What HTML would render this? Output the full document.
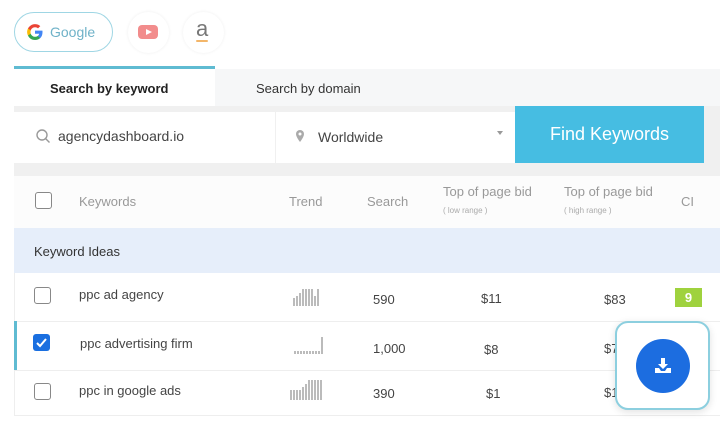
<!DOCTYPE html>
<html><head><meta charset="utf-8"><style>
*{margin:0;padding:0;box-sizing:border-box}
body{width:720px;height:422px;background:#fff;font-family:"Liberation Sans",sans-serif;position:relative;overflow:hidden;color:#333}
.a{position:absolute}
.t{font-size:13px;color:#444}
.h{font-size:13px;color:#999}
.cb{position:absolute;width:17px;height:17px;border:1.5px solid #888;border-radius:3px;background:#fff}
.bars{position:absolute;display:flex;align-items:flex-end;gap:1px;height:20px}
.bars i{display:block;width:2px;background:#bbb}
</style></head><body>
<!-- top pills -->
<div class="a" style="left:14px;top:12px;width:99px;height:40px;border:1.5px solid #9fd6e4;border-radius:20px;background:#fff"></div>
<svg class="a" style="left:25px;top:22px" width="20" height="20" viewBox="0 0 20 20">
<path d="M17.5 10.2c0-.6 0-1.1-.1-1.6H10v3.1h4.2a3.6 3.6 0 0 1-1.6 2.4v2h2.6c1.5-1.4 2.3-3.4 2.3-5.9z" fill="#4285f4"/>
<path d="M10 18c2.2 0 4-.7 5.2-2l-2.6-2c-.7.5-1.6.8-2.6.8-2 0-3.7-1.4-4.3-3.2H3v2.1A8 8 0 0 0 10 18z" fill="#34a853"/>
<path d="M5.7 11.6a4.8 4.8 0 0 1 0-3.1V6.4H3a8 8 0 0 0 0 7.2z" fill="#fbbc05"/>
<path d="M10 5.2c1.1 0 2.2.4 3 1.2l2.3-2.3A8 8 0 0 0 3 6.4l2.7 2.1C6.3 6.6 8 5.2 10 5.2z" fill="#ea4335"/>
</svg>
<div class="a" style="left:50px;top:24px;font-size:14px;color:#6fb2c8">Google</div>
<div class="a" style="left:128px;top:12px;width:41px;height:41px;border-radius:50%;box-shadow:0 0 3px #eee;background:#fff"></div>
<div class="a" style="left:138px;top:25px;width:20px;height:14px;background:#f28c8c;border-radius:4px"></div>
<div class="a" style="left:146px;top:29px;width:0;height:0;border-left:6px solid #fff;border-top:3.5px solid transparent;border-bottom:3.5px solid transparent"></div>
<div class="a" style="left:183px;top:12px;width:41px;height:41px;border-radius:50%;box-shadow:0 0 3px #eee;background:#fff"></div>
<div class="a" style="left:196px;top:16px;font-size:22px;color:#777">a</div>
<div class="a" style="left:196px;top:40px;width:12px;height:2px;background:#f3b66a;border-radius:2px"></div>
<!-- tabs -->
<div class="a" style="left:14px;top:66px;width:201px;height:3px;background:#5fbbd2"></div>
<div class="a" style="left:215px;top:69px;width:505px;height:37px;background:#f6f7f8"></div>
<div class="a" style="left:14px;top:69px;width:201px;height:37px;background:#fff"></div>
<div class="a" style="left:50px;top:81px;font-size:13px;font-weight:bold;color:#222">Search by keyword</div>
<div class="a" style="left:256px;top:81px;font-size:13px;color:#333">Search by domain</div>
<!-- search -->
<div class="a" style="left:14px;top:106px;width:706px;height:70px;background:#f0f0f0"></div>
<div class="a" style="left:14px;top:112px;width:261px;height:51px;background:#fff"></div>
<div class="a" style="left:275px;top:112px;width:240px;height:51px;background:#fff;border-left:1px solid #f0f0f0"></div>
<svg class="a" style="left:35px;top:128px" width="16" height="16" viewBox="0 0 16 16"><circle cx="7" cy="7" r="5" fill="none" stroke="#999" stroke-width="1.4"/><path d="M10.5 10.5l4 4" stroke="#999" stroke-width="1.4"/></svg>
<div class="a" style="left:58px;top:128px;font-size:14px;color:#444">agencydashboard.io</div>
<svg class="a" style="left:295px;top:129px" width="10" height="14" viewBox="0 0 10 14"><path d="M5 1a4 4 0 0 0-4 4c0 3 4 8 4 8s4-5 4-8a4 4 0 0 0-4-4z" fill="#aaa"/><circle cx="5" cy="5" r="1.5" fill="#fff"/></svg>
<div class="a" style="left:318px;top:129px;font-size:14px;color:#444">Worldwide</div>
<div class="a" style="left:497px;top:131px;border-top:4px solid #999;border-left:3px solid transparent;border-right:3px solid transparent"></div>
<div class="a" style="left:515px;top:106px;width:189px;height:57px;background:#46bde2;color:#fff;font-size:18px;text-align:center;line-height:57px">Find Keywords</div>
<!-- table -->
<div class="a" style="left:14px;top:176px;width:706px;height:240px;background:#fff;border-left:1px solid #eee;border-bottom:1px solid #eee"></div>
<div class="a" style="left:14px;top:176px;width:706px;height:52px;background:#fcfcfc"></div>
<div class="cb" style="left:35px;top:192px"></div>
<div class="a h" style="left:79px;top:194px">Keywords</div>
<div class="a h" style="left:289px;top:194px">Trend</div>
<div class="a h" style="left:367px;top:194px">Search</div>
<div class="a h" style="left:443px;top:184px">Top of page bid</div>
<div class="a" style="left:443px;top:206px;font-size:8px;color:#aaa">( low range )</div>
<div class="a h" style="left:564px;top:184px">Top of page bid</div>
<div class="a" style="left:564px;top:206px;font-size:8px;color:#aaa">( high range )</div>
<div class="a h" style="left:681px;top:194px">CI</div>
<div class="a" style="left:14px;top:228px;width:706px;height:45px;background:#e6eefa"></div>
<div class="a" style="left:34px;top:244px;font-size:13px;color:#333">Keyword Ideas</div>
<div class="a" style="left:14px;top:321px;width:706px;height:1px;background:#eee"></div>
<div class="a" style="left:14px;top:370px;width:706px;height:1px;background:#eee"></div>
<div class="a" style="left:14px;top:321px;width:3px;height:49px;background:#5fbbd2"></div>
<!-- row1 -->
<div class="cb" style="left:34px;top:287px"></div>
<div class="a t" style="left:79px;top:287px">ppc ad agency</div>
<div class="bars" style="left:293px;top:286px"><i style="height:8px"></i><i style="height:10px"></i><i style="height:13px"></i><i style="height:17px"></i><i style="height:17px"></i><i style="height:17px"></i><i style="height:17px"></i><i style="height:10px"></i><i style="height:17px"></i></div>
<div class="a t" style="left:373px;top:292px">590</div>
<div class="a t" style="left:481px;top:291px">$11</div>
<div class="a t" style="left:604px;top:292px">$83</div>
<div class="a" style="left:675px;top:288px;width:27px;height:19px;background:#9fd23e;color:#fff;font-size:13px;font-weight:bold;text-align:center;line-height:19px">9</div>
<!-- row2 -->
<div class="a" style="left:33px;top:334px;width:17px;height:17px;background:#1a6fe0;border-radius:3px"></div>
<svg class="a" style="left:33px;top:334px" width="17" height="17"><path d="M4 9l3 3 6-7" stroke="#fff" stroke-width="2" fill="none"/></svg>
<div class="a t" style="left:80px;top:336px">ppc advertising firm</div>
<div class="bars" style="left:294px;top:334px"><i style="height:3px"></i><i style="height:3px"></i><i style="height:3px"></i><i style="height:3px"></i><i style="height:3px"></i><i style="height:3px"></i><i style="height:3px"></i><i style="height:3px"></i><i style="height:3px"></i><i style="height:17px"></i></div>
<div class="a t" style="left:373px;top:341px">1,000</div>
<div class="a t" style="left:484px;top:342px">$8</div>
<div class="a t" style="left:604px;top:341px">$7</div>
<!-- row3 -->
<div class="cb" style="left:34px;top:383px"></div>
<div class="a t" style="left:79px;top:383px">ppc in google ads</div>
<div class="bars" style="left:290px;top:380px"><i style="height:10px"></i><i style="height:10px"></i><i style="height:10px"></i><i style="height:10px"></i><i style="height:13px"></i><i style="height:16px"></i><i style="height:20px"></i><i style="height:20px"></i><i style="height:20px"></i><i style="height:20px"></i><i style="height:20px"></i></div>
<div class="a t" style="left:373px;top:386px">390</div>
<div class="a t" style="left:486px;top:386px">$1</div>
<div class="a t" style="left:604px;top:385px">$1</div>
<!-- download -->
<div class="a" style="left:615px;top:321px;width:95px;height:89px;background:#fff;border:2px solid #8ccfdf;border-radius:13px;box-shadow:0 2px 8px rgba(0,0,0,.12)"></div>
<div class="a" style="left:636px;top:339px;width:54px;height:54px;border-radius:50%;background:#1c6de0"></div>
<svg class="a" style="left:651px;top:354px" width="24" height="24" viewBox="0 0 24 24"><path d="M10 4h4v6h3l-5 5-5-5h3z" fill="#fff"/><path d="M4 14h4l2 3h4l2-3h4v5H4z" fill="#fff"/></svg>
</body></html>
